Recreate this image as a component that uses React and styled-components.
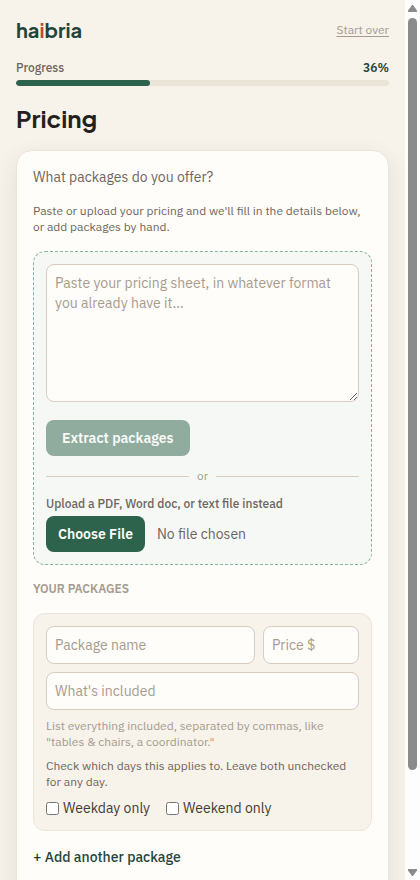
import React from "react";
import { useState } from "react";
import styled, { createGlobalStyle } from "styled-components";

const GlobalStyle = createGlobalStyle`
  * { box-sizing: border-box; }
  body {
    margin: 0;
    background: #f7f2ea;
    color: #6f655d;
    font-family: "IBM Plex Sans", Roboto, sans-serif;
    font-size: 14px;
    line-height: 20px;
  }
  p, h1, h2 { margin: 0; }
  button, input, textarea { font: inherit; }
`;

const Window = styled.div`
  display: flex;
  height: 100vh;
`;

const Page = styled.main`
  flex: 1;
  min-width: 0;
  padding: 16px;
  overflow-y: auto;
  scrollbar-width: none;
  display: flex;
  flex-direction: column;
  gap: 16px;
`;

const ScrollRail = styled.div`
  width: 15px;
  flex: none;
  padding: 5px 3px 4px;
  background: #fdfdfd;
  display: flex;
  flex-direction: column;
  align-items: center;
  gap: 6px;
`;

const ScrollTrack = styled.div`
  flex: 1;
  align-self: stretch;
`;

const ScrollThumb = styled.div`
  height: 89%;
  border-radius: 5px;
  background: #8b8b8b;
`;

const Header = styled.header`
  flex: none;
  height: 28px;
  display: flex;
  align-items: center;
  justify-content: space-between;
`;

const Logo = styled.span`
  font-family: "Plus Jakarta Sans", Inter, sans-serif;
  font-size: 20px;
  line-height: 28px;
  font-weight: 700;
  color: #1f453a;
  span { color: #bd4b32; }
`;

const StartOver = styled.a`
  font-size: 12px;
  line-height: 16px;
  color: #a59b8f;
  text-decoration: underline;
  text-underline-offset: 2px;
`;

const Progress = styled.div`
  flex: none;
  display: flex;
  flex-direction: column;
  gap: 4px;
`;

const ProgressLabels = styled.div`
  display: flex;
  justify-content: space-between;
  font-size: 12px;
  line-height: 16px;
  font-weight: 500;
  strong { color: #1f453a; font-weight: 600; }
`;

const ProgressTrack = styled.div`
  height: 6px;
  border-radius: 3px;
  background: #ebe4d8;
  overflow: hidden;
`;

const ProgressFill = styled.div`
  height: 100%;
  border-radius: 3px;
  background: #2d624c;
`;

const Title = styled.h1`
  font-family: "Plus Jakarta Sans", Inter, sans-serif;
  font-size: 24px;
  line-height: 32px;
  font-weight: 700;
  color: #231f1c;
`;

const Card = styled.section`
  flex: none;
  padding: 16px 16px 48px;
  border: 1px solid #ebe4d8;
  border-radius: 16px;
  background: #fffdf9;
  box-shadow: 0 8px 24px rgba(60, 45, 35, 0.1);
  display: flex;
  flex-direction: column;
  gap: 16px;
`;

const Small = styled.p`
  font-size: 12px;
  line-height: 16px;
  color: ${(props) => (props.$muted ? "#a59b8f" : "#6f655d")};
`;

const ImportBox = styled.div`
  padding: 12px;
  border: 1px dashed #83b39d;
  border-radius: 12px;
  background: #f5f8f5;
  display: flex;
  flex-direction: column;
  gap: 12px;
`;

const PasteArea = styled.textarea`
  display: block;
  width: 100%;
  margin: 0 0 6px;
  padding: 8px;
  border: 1px solid #d8cdc0;
  border-radius: 8px;
  background: #fffdf9;
  color: #443b35;
  resize: vertical;
  &::placeholder { color: #a59b8f; }
`;

const ExtractButton = styled.button`
  align-self: flex-start;
  padding: 8px 16px;
  border: 0;
  border-radius: 8px;
  background: #2d624c;
  color: #fffdf9;
  font-weight: 600;
  opacity: 0.5;
`;

const Divider = styled.div`
  display: flex;
  align-items: center;
  gap: 8px;
  font-size: 12px;
  line-height: 16px;
  color: #a59b8f;
  &::before, &::after {
    content: "";
    flex: 1;
    height: 1px;
    background: #d8cdc0;
  }
`;

const UploadField = styled.label`
  display: flex;
  flex-direction: column;
  gap: 4px;
  font-size: 12px;
  line-height: 16px;
  font-weight: 500;
`;

const FileInput = styled.input`
  width: 100%;
  font-size: 14px;
  line-height: 20px;
  font-weight: 400;
  &::file-selector-button {
    margin: 0 12px 0 0;
    padding: 8px 12px;
    border: 0;
    border-radius: 8px;
    background: #2d624c;
    color: #fffdf9;
    font: inherit;
    font-weight: 600;
  }
`;

const SectionLabel = styled.h2`
  font-size: 12px;
  line-height: 16px;
  font-weight: 600;
  text-transform: uppercase;
  color: #a59b8f;
`;

const PackageBox = styled.div`
  padding: 12px;
  border: 1px solid #ebe4d8;
  border-radius: 12px;
  background: #f7f2ea;
  display: flex;
  flex-direction: column;
  gap: 8px;
`;

const FieldRow = styled.div`
  display: flex;
  gap: 8px;
`;

const TextField = styled.input`
  ${(props) => (props.$narrow ? "flex: none; width: 96px;" : "flex: 1; min-width: 0;")}
  height: 38px;
  padding: 8px;
  border: 1px solid #d8cdc0;
  border-radius: 8px;
  background: #fffdf9;
  color: #443b35;
  &::placeholder { color: #a59b8f; }
`;

const DayRow = styled.div`
  display: flex;
  gap: 16px;
`;

const DayLabel = styled.label`
  display: flex;
  align-items: center;
  gap: 4px;
  color: #443b35;
  input { margin: 0; width: 13px; height: 13px; }
`;

const AddButton = styled.button`
  align-self: flex-start;
  padding: 0;
  border: 0;
  background: none;
  color: #1f453a;
  font-weight: 500;
`;

function ScrollArrow({ down }) {
  return (
    <svg width="9" height="7" viewBox="0 0 9 7" fill="#8b8b8b">
      <path d={down ? "M0 0h9v1.5L5 7H4L0 1.500z" : "M0 7h9V5.500L5 0H4L0 5.500z"} />
    </svg>
  );
}

function PackageForm() {
  const [days, setDays] = useState({ weekday: false, weekend: false });
  const toggle = (day) => setDays({ ...days, [day]: !days[day] });

  return (
    <PackageBox>
      <FieldRow>
        <TextField placeholder="Package name" aria-label="Package name" />
        <TextField $narrow placeholder="Price $" aria-label="Price $" />
      </FieldRow>
      <FieldRow>
        <TextField placeholder="What's included" aria-label="What's included" />
      </FieldRow>
      <Small $muted>
        List everything included, separated by commas, like "tables &amp; chairs, a coordinator."
      </Small>
      <Small>Check which days this applies to. Leave both unchecked for any day.</Small>
      <DayRow>
        <DayLabel>
          <input type="checkbox" checked={days.weekday} onChange={() => toggle("weekday")} />
          Weekday only
        </DayLabel>
        <DayLabel>
          <input type="checkbox" checked={days.weekend} onChange={() => toggle("weekend")} />
          Weekend only
        </DayLabel>
      </DayRow>
    </PackageBox>
  );
}

function App() {
  const [percent] = useState(36);
  const [count, setCount] = useState(1);
  const [text, setText] = useState("");

  return (
    <Window>
      <GlobalStyle />
      <Page>
        <Header>
          <Logo>ha<span>i</span>bria</Logo>
          <StartOver href="#">Start over</StartOver>
        </Header>
        <Progress>
          <ProgressLabels>
            <span>Progress</span>
            <strong>{percent}%</strong>
          </ProgressLabels>
          <ProgressTrack>
            <ProgressFill style={{ width: percent + "%" }} />
          </ProgressTrack>
        </Progress>
        <Title>Pricing</Title>
        <Card>
          <p>What packages do you offer?</p>
          <Small>
            Paste or upload your pricing and we'll fill in the details below, or add packages by hand.
          </Small>
          <ImportBox>
            <PasteArea
              rows={6}
              aria-label="Pricing sheet"
              placeholder="Paste your pricing sheet, in whatever format you already have it…"
              value={text}
              onChange={(e) => setText(e.target.value)}
            />
            <ExtractButton disabled={!text}>Extract packages</ExtractButton>
            <Divider>or</Divider>
            <UploadField>
              Upload a PDF, Word doc, or text file instead
              <FileInput type="file" />
            </UploadField>
          </ImportBox>
          <SectionLabel>Your packages</SectionLabel>
          {Array.from({ length: count }, (_, i) => (
            <PackageForm key={i} />
          ))}
          <AddButton onClick={() => setCount(count + 1)}>+ Add another package</AddButton>
        </Card>
      </Page>
      <ScrollRail aria-hidden="true">
        <ScrollArrow />
        <ScrollTrack>
          <ScrollThumb />
        </ScrollTrack>
        <ScrollArrow down />
      </ScrollRail>
    </Window>
  );
}

export default App;
